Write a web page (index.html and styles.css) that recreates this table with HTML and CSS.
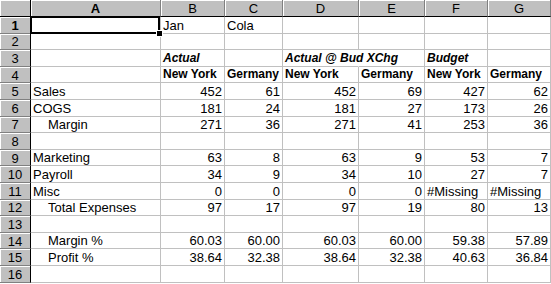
FILE: index.html
```html
<!DOCTYPE html>
<html>
<head>
<meta charset="utf-8">
<link rel="stylesheet" href="styles.css">
</head>
<body>
<div class="sheet">
  <div class="hd corner"></div>
  <div class="hd col sel">A</div>
  <div class="hd col">B</div>
  <div class="hd col">C</div>
  <div class="hd col">D</div>
  <div class="hd col">E</div>
  <div class="hd col">F</div>
  <div class="hd col last">G</div>

  <div class="hd row sel">1</div>
  <div class="c active"><span class="handle"></span></div>
  <div class="c t">Jan</div>
  <div class="c t">Cola</div>
  <div class="c"></div><div class="c"></div><div class="c"></div><div class="c"></div>

  <div class="hd row">2</div>
  <div class="c"></div><div class="c"></div><div class="c"></div><div class="c"></div><div class="c"></div><div class="c"></div><div class="c"></div>

  <div class="hd row">3</div>
  <div class="c"></div>
  <div class="c t bi">Actual</div>
  <div class="c"></div>
  <div class="c t bi nogrid">Actual @ Bud XChg</div>
  <div class="c"></div>
  <div class="c t bi">Budget</div>
  <div class="c"></div>

  <div class="hd row">4</div>
  <div class="c"></div>
  <div class="c t b">New York</div>
  <div class="c t b">Germany</div>
  <div class="c t b">New York</div>
  <div class="c t b">Germany</div>
  <div class="c t b">New York</div>
  <div class="c t b">Germany</div>

  <div class="hd row">5</div>
  <div class="c t">Sales</div>
  <div class="c n">452</div><div class="c n">61</div><div class="c n">452</div><div class="c n">69</div><div class="c n">427</div><div class="c n">62</div>

  <div class="hd row">6</div>
  <div class="c t">COGS</div>
  <div class="c n">181</div><div class="c n">24</div><div class="c n">181</div><div class="c n">27</div><div class="c n">173</div><div class="c n">26</div>

  <div class="hd row">7</div>
  <div class="c t i2">Margin</div>
  <div class="c n">271</div><div class="c n">36</div><div class="c n">271</div><div class="c n">41</div><div class="c n">253</div><div class="c n">36</div>

  <div class="hd row">8</div>
  <div class="c"></div><div class="c"></div><div class="c"></div><div class="c"></div><div class="c"></div><div class="c"></div><div class="c"></div>

  <div class="hd row">9</div>
  <div class="c t">Marketing</div>
  <div class="c n">63</div><div class="c n">8</div><div class="c n">63</div><div class="c n">9</div><div class="c n">53</div><div class="c n">7</div>

  <div class="hd row">10</div>
  <div class="c t">Payroll</div>
  <div class="c n">34</div><div class="c n">9</div><div class="c n">34</div><div class="c n">10</div><div class="c n">27</div><div class="c n">7</div>

  <div class="hd row">11</div>
  <div class="c t">Misc</div>
  <div class="c n">0</div><div class="c n">0</div><div class="c n">0</div><div class="c n">0</div><div class="c t">#Missing</div><div class="c t">#Missing</div>

  <div class="hd row">12</div>
  <div class="c t i2">Total Expenses</div>
  <div class="c n">97</div><div class="c n">17</div><div class="c n">97</div><div class="c n">19</div><div class="c n">80</div><div class="c n">13</div>

  <div class="hd row">13</div>
  <div class="c"></div><div class="c"></div><div class="c"></div><div class="c"></div><div class="c"></div><div class="c"></div><div class="c"></div>

  <div class="hd row">14</div>
  <div class="c t i2">Margin %</div>
  <div class="c n">60.03</div><div class="c n">60.00</div><div class="c n">60.03</div><div class="c n">60.00</div><div class="c n">59.38</div><div class="c n">57.89</div>

  <div class="hd row">15</div>
  <div class="c t i2">Profit %</div>
  <div class="c n">38.64</div><div class="c n">32.38</div><div class="c n">38.64</div><div class="c n">32.38</div><div class="c n">40.63</div><div class="c n">36.84</div>

  <div class="hd row">16</div>
  <div class="c"></div><div class="c"></div><div class="c"></div><div class="c"></div><div class="c"></div><div class="c"></div><div class="c"></div>
</div>
</body>
</html>
```
FILE: styles.css
```css
html, body {
  margin: 0;
  padding: 0;
  background: #ffffff;
}
body {
  width: 551px;
  height: 284px;
  overflow: hidden;
}
.sheet {
  display: grid;
  grid-template-columns: 31px 130px 64px 58px 76px 66px 63px 63px;
  grid-template-rows: 17px repeat(16, 16.6px);
  font-family: "Liberation Sans", Arial, sans-serif;
  font-size: 13px;
  color: #000;
}
.hd {
  background: #c0c0c0;
  box-sizing: border-box;
  border-right: 1px solid #808080;
  border-bottom: 1px solid #808080;
  box-shadow: inset 1px 1px 0 #ffffff;
  display: flex;
  align-items: center;
  justify-content: center;
  line-height: 1;
  font-size: 13px;
}
.col {
  border-bottom-color: #000;
}
.row {
  border-right-color: #000;
  padding-top: 1px;
}
.corner {
  border-bottom-color: #000;
  border-right-color: #000;
}
.sel {
  font-weight: bold;
}
.c {
  box-sizing: border-box;
  border-right: 1px solid #c0c0c0;
  border-bottom: 1px solid #c0c0c0;
  display: flex;
  align-items: flex-end;
  white-space: nowrap;
  line-height: 13px;
  padding-bottom: 1px;
  background: #fff;
  min-width: 0;
}
.t {
  padding-left: 2px;
  justify-content: flex-start;
  overflow: visible;
  position: relative;
  z-index: 1;
}
.n {
  justify-content: flex-end;
  padding-right: 2px;
}
.i2 {
  padding-left: 17px;
}
.b {
  font-weight: bold;
  font-size: 12px;
}
.bi {
  font-weight: bold;
  font-style: italic;
  font-size: 12px;
}
.nogrid {
  border-right-color: #fff;
}
.active {
  position: relative;
}
.active::before {
  content: "";
  position: absolute;
  left: -1px;
  top: -1px;
  width: 130px;
  height: 18px;
  box-sizing: border-box;
  border: 2px solid #000;
}
.handle {
  position: absolute;
  left: 126px;
  top: 14px;
  width: 5px;
  height: 5px;
  background: #000;
  outline: 1px solid #fff;
  z-index: 2;
}
```
